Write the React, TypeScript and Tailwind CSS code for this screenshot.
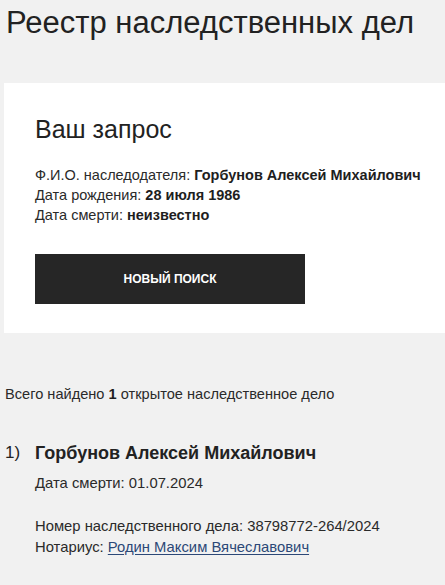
import React from "react";

export default function App() {
  return (
    <div
      className="min-h-[585px] w-full bg-[#f1f1f1] text-[#222222]"
      style={{ fontFamily: '"Liberation Sans", Arial, sans-serif' }}
    >
      <h1 className="pl-[6px] pt-[6px] text-[31px] leading-[34px] font-normal">
        Реестр наследственных дел
      </h1>

      <div className="ml-[4px] mt-[43px] bg-white pl-[31px] pr-4 pt-[32px] pb-[29px]">
        <h2 className="text-[25px] leading-[29px] font-normal">Ваш запрос</h2>
        <div className="mt-[21px] text-[14.5px] leading-[20px] text-[#2a2a2a]">
          <div>
            Ф.И.О. наследодателя: <b className="text-[#1e1e1e]">Горбунов Алексей Михайлович</b>
          </div>
          <div>
            Дата рождения: <b className="text-[#1e1e1e]">28 июля 1986</b>
          </div>
          <div>
            Дата смерти: <b className="text-[#1e1e1e]">неизвестно</b>
          </div>
        </div>
        <button className="mt-[29px] flex h-[50px] w-[270px] items-center justify-center bg-[#262626] text-[12px] font-bold uppercase text-white">
          Новый поиск
        </button>
      </div>

      <div className="mt-[51px] pl-[5px] text-[14.6px] leading-[20px] text-[#2a2a2a]">
        Всего найдено <b className="text-[#1e1e1e]">1</b> открытое наследственное дело
      </div>

      <div className="mt-[37px] flex">
        <div className="w-[35px] pl-[5px] text-[17px] leading-[24px]">1)</div>
        <div className="flex flex-col">
          <div className="text-[18px] font-bold leading-[24px]">
            Горбунов Алексей Михайлович
          </div>
          <div className="mt-[8px] text-[14.8px] leading-[20px] text-[#2a2a2a]">
            Дата смерти: 01.07.2024
          </div>
          <div className="mt-[23px] text-[14.8px] leading-[21px] text-[#2a2a2a]">
            <div>Номер наследственного дела: 38798772-264/2024</div>
            <div>
              Нотариус:{" "}
              <a
                href="#"
                className="text-[#2c4877] underline decoration-[#2c4877] underline-offset-[2px]"
              >
                Родин Максим Вячеславович
              </a>
            </div>
          </div>
        </div>
      </div>
    </div>
  );
}
